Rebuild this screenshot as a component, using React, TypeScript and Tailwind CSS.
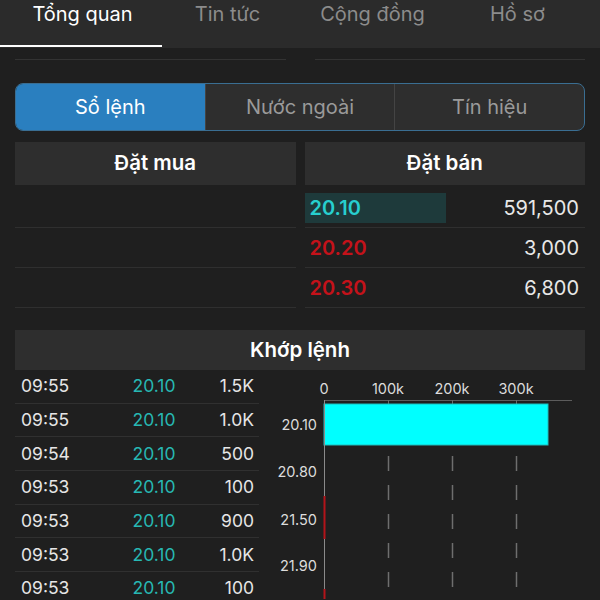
import React from 'react';

const TABS = ['Tổng quan', 'Tin tức', 'Cộng đồng', 'Hồ sơ'];
const SEGMENTS = ['Sổ lệnh', 'Nước ngoài', 'Tín hiệu'];

const ASKS: { price: string; vol: string; up: boolean }[] = [
  { price: '20.10', vol: '591,500', up: true },
  { price: '20.20', vol: '3,000', up: false },
  { price: '20.30', vol: '6,800', up: false },
];

const TRADES: [string, string, string][] = [
  ['09:55', '20.10', '1.5K'],
  ['09:55', '20.10', '1.0K'],
  ['09:54', '20.10', '500'],
  ['09:53', '20.10', '100'],
  ['09:53', '20.10', '900'],
  ['09:53', '20.10', '1.0K'],
  ['09:53', '20.10', '100'],
];

// chart coords are local to the svg, which starts at page x=259, y=371
const X0 = 65;
const GRID = [129, 193, 257];
const TICKS = [
  { x: X0, label: '0' },
  { x: 129, label: '100k' },
  { x: 193, label: '200k' },
  { x: 257, label: '300k' },
];
const YLABELS = [
  { y: 55, label: '20.10' },
  { y: 102, label: '20.80' },
  { y: 150, label: '21.50' },
  { y: 196, label: '21.90' },
];

function VolumeChart() {
  return (
    <svg width={327} height={229} className="shrink-0" style={{ fontFamily: 'Inter, sans-serif' }}>
      {TICKS.map((t) => (
        <text key={t.label} x={t.x} y={24} fill="#dcdcdc" fontSize={14.5} textAnchor="middle">
          {t.label}
        </text>
      ))}
      <line x1={X0} y1={30.5} x2={313} y2={30.5} stroke="#5c5c5c" strokeWidth={1} />
      {GRID.map((x) => (
        <line key={x} x1={x + 0.5} y1={30} x2={x + 0.5} y2={34} stroke="#6a6a6a" strokeWidth={1} />
      ))}
      {GRID.map((x) => (
        <line
          key={`g${x}`}
          x1={x + 0.5}
          y1={86}
          x2={x + 0.5}
          y2={229}
          stroke="#6e6e6e"
          strokeWidth={1.5}
          strokeDasharray="15 14"
        />
      ))}
      <rect x={X0} y={34} width={224} height={41} fill="#00ffff" stroke="#1fbcbc" strokeWidth={1} />
      <line x1={X0 + 0.5} y1={30} x2={X0 + 0.5} y2={229} stroke="#8a8a8a" strokeWidth={1} />
      <rect x={X0 - 0.5} y={126} width={2} height={43} fill="#b3141a" />
      <rect x={X0 - 0.5} y={219} width={2} height={10} fill="#b3141a" />
      {YLABELS.map((l) => (
        <text key={l.label} x={58} y={l.y + 5} fill="#dcdcdc" fontSize={14.5} textAnchor="end">
          {l.label}
        </text>
      ))}
    </svg>
  );
}

export default function App() {
  return (
    <div
      className="h-[600px] w-[600px] overflow-hidden bg-[#1f1f1f] text-white"
      style={{ fontFamily: 'Inter, "Noto Sans", sans-serif' }}
    >
      {/* top tab bar */}
      <div className="flex h-[48px] flex-col bg-[#2b2b2b]">
        <div className="grid h-[28px] grid-cols-4 items-center px-[10px] text-[20px] leading-none">
          {TABS.map((t, i) => (
            <div key={t} className={`text-center ${i === 0 ? 'text-white' : 'text-[#8c8c8c]'}`}>
              {t}
            </div>
          ))}
        </div>
        <div className="flex-1" />
        <div className="mb-[1px] h-[2px] w-[162px] bg-white" />
      </div>

      {/* remnants of the section above */}
      <div className="mt-[11px] flex gap-[29px] px-[15px]">
        <div className="h-px flex-1 bg-[#333]" />
        <div className="h-px flex-1 bg-[#333]" />
      </div>

      {/* segmented control */}
      <div className="mx-[15px] mt-[23px] flex h-[48px] overflow-hidden rounded-[8px] border border-[#3a6e92] bg-[#2e2e2e] text-[20px]">
        {SEGMENTS.map((s, i) => (
          <div
            key={s}
            className={`flex flex-1 items-center justify-center ${
              i === 0 ? 'bg-[#2a7fbf] text-white' : 'border-l border-[#444] text-[#9a9a9a]'
            }`}
          >
            {s}
          </div>
        ))}
      </div>

      {/* order book */}
      <div className="mx-[15px] mt-[11px] grid grid-cols-2 gap-[9px]">
        <div>
          <div className="flex h-[43px] items-center justify-center bg-[#2e2e2e] text-[20.5px] font-semibold">Đặt mua</div>
          <div className="mt-[3px]">
            {ASKS.map((a) => (
              <div key={a.price} className="h-[40px] border-b border-[#2f2f2f]" />
            ))}
          </div>
        </div>
        <div>
          <div className="flex h-[43px] items-center justify-center bg-[#2e2e2e] text-[20.5px] font-semibold">Đặt bán</div>
          <div className="mt-[3px]">
            {ASKS.map((a) => (
              <div key={a.price} className="flex h-[40px] items-stretch border-b border-[#2f2f2f] pt-[5px] pb-[4px]">
                <div
                  className={`flex w-[141px] items-center pl-[5px] text-[20px] font-semibold ${
                    a.up ? 'bg-[#1e3a3b] text-[#27cfcf]' : 'text-[#c4121a]'
                  }`}
                >
                  {a.price}
                </div>
                <div className="flex flex-1 items-center justify-end pr-[6px] text-[20px] text-[#e8e8e8]">{a.vol}</div>
              </div>
            ))}
          </div>
        </div>
      </div>

      {/* matched trades */}
      <div className="mx-[15px] mt-[22px] flex h-[40px] items-center justify-center bg-[#2e2e2e] text-[20.5px] font-semibold">
        Khớp lệnh
      </div>
      <div className="flex pl-[15px]">
        <div className="w-[244px] shrink-0">
          {TRADES.map(([t, p, v], i) => (
            <div key={i} className="grid h-[33.7px] grid-cols-[95px_88px_1fr] items-center border-b border-[#303030] text-[17.5px]">
              <span className="pl-[6px] text-[#e6e6e6]">{t}</span>
              <span className="text-center text-[#27b8b3]">{p}</span>
              <span className="pr-[5px] text-right text-[#e6e6e6]">{v}</span>
            </div>
          ))}
        </div>
        <VolumeChart />
      </div>
    </div>
  );
}
